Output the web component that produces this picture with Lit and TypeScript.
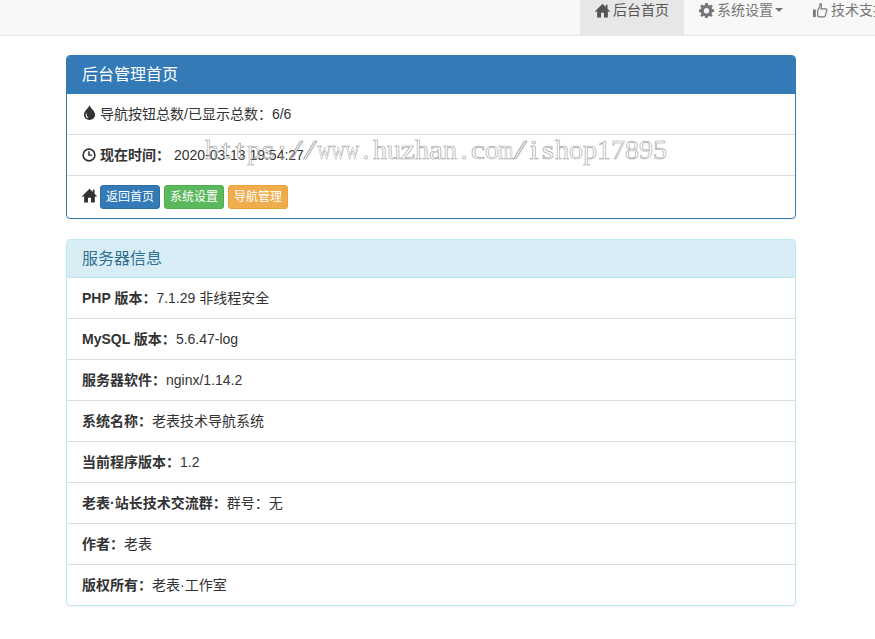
import { LitElement, html, css, svg } from "lit";
import { customElement } from "lit/decorators.js";

const home = svg`<path d="M7 .8 0 7.600l.9.9L2 7.500V13.500h3.600V9.200h2.800v4.300H12V7.500l1.100 1 .9-.9-2.300-2.200V1.600H10v2.200L7 .8z"/>`;
const tint = svg`<path fill-rule="evenodd" d="M7 0C6.300 3 1.800 5.400 1.800 9.200 1.800 11.900 4.100 14 7 14s5.200-2.100 5.200-4.800C12.200 5.400 7.700 3 7 0zM5.300 12.300C4.100 11.700 3.400 10.500 3.400 9.200c0-.8.300-1.500.7-2.200 0 1.900.4 3.800 1.900 5.000z"/>`;
const time = svg`<path fill-rule="evenodd" d="M7 .3a6.700 6.700 0 1 0 0 13.400A6.700 6.700 0 0 0 7 .3zM7 1.900a5.100 5.100 0 1 1 0 10.200A5.100 5.100 0 0 1 7 1.900zM6.200 3.300v4.500h4V6.400H7.700V3.300z"/>`;
const cog = svg`<path fill-rule="evenodd" d="M5.800 0h2.400l.3 1.900 1.200.5L11.300 1.300 12.900 3l-1.100 1.500.5 1.200 1.700.3v2.400l-1.800.3-.5 1.200 1.100 1.500-1.600 1.700-1.600-1.100-1.200.5-.3 1.900H5.800l-.3-1.900-1.200-.5-1.600 1.100L1.100 11.500l1.100-1.500-.5-1.200L0 8.400V6l1.700-.3.500-1.200L1.100 3l1.600-1.700 1.600 1.100 1.200-.5zM7 4.700a2.500 2.500 0 1 0 0 5 2.500 2.500 0 0 0 0-5z"/>`;
const thumb = svg`<path fill-rule="evenodd" d="M0 6h2.600v7H0zM6.700 0c1.300 0 2 1 1.800 2.300L8.100 5h3.700c1.300 0 2 1.100 1.600 2.300l-1.500 4.800c-.3.900-.9 1.400-1.900 1.400H6.500c-1 0-1.900-.4-2.700-1V6.200C5 5 6 3.500 6.100.6 6.100.2 6.300 0 6.700 0zm.4 1.300C7 3.700 6 5.500 4.900 6.700v5.200c.5.300 1 .5 1.600.5H10c.4 0 .7-.2.800-.6l1.500-4.800c.2-.6-.1-.9-.6-.9H6.800l.6-3.800c.1-.5 0-.8-.3-1z"/>`;

const ic = (p: unknown) =>
  html`<svg class="ic" viewBox="0 0 14 14" fill="currentColor" aria-hidden="true">${p}</svg>`;

const rows: [string, string][] = [
  ["PHP 版本：", "7.1.29 非线程安全"],
  ["MySQL 版本：", "5.6.47-log"],
  ["服务器软件：", "nginx/1.14.2"],
  ["系统名称：", "老表技术导航系统"],
  ["当前程序版本：", "1.2"],
  ["老表·站长技术交流群：", "群号：无"],
  ["作者：", "老表"],
  ["版权所有：", "老表·工作室"],
];

const mark = "https://www.huzhan.com/ishop17895";
const cellClass = (c: string) => {
  if (c === "w" || c === "m") return "cell narrow";
  if (c === "/") return "cell wide";
  if ("tsiaczl:".includes(c)) return "cell fuller";
  return "cell";
};

@customElement("app-root")
export class AppRoot extends LitElement {
  static styles = css`
    :host {
      display: block;
      position: relative;
      height: 639px;
      overflow: hidden;
      background: #fff;
      color: #333;
      font: 14px/20px "Liberation Sans", "Noto Sans CJK SC", sans-serif;
    }
    .ic { width: 14px; height: 14px; flex: none; }
    .nav {
      display: flex;
      height: 35px;
      padding-left: 580px;
      background: #f8f8f8;
      border-bottom: 1px solid #e7e7e7;
      white-space: nowrap;
      color: #777;
    }
    .nav a {
      display: flex;
      align-items: center;
      gap: 3px;
      flex: none;
      padding: 0 15px 15px;
      height: 20px;
    }
    .nav .ic { width: 15px; height: 15px; }
    .nav a.active { background: #e7e7e7; color: #555; }
    .caret {
      width: 0; height: 0;
      margin-left: -1px;
      border-top: 4px solid #777;
      border-left: 4px solid transparent;
      border-right: 4px solid transparent;
    }
    .page {
      display: flex;
      flex-direction: column;
      gap: 20px;
      width: 730px;
      margin: 19px 0 0 66px;
    }
    .panel {
      border: 1px solid #337ab7;
      border-radius: 4px;
      box-shadow: 0 1px 1px rgba(0, 0, 0, .05);
      overflow: hidden;
    }
    .panel.info { border-color: #bce8f1; }
    .head {
      padding: 10px 15px;
      font-size: 16px;
      line-height: 17px;
      background: #337ab7;
      color: #fff;
      border-bottom: 1px solid #337ab7;
    }
    .info .head { background: #d9edf7; color: #31708f; border-bottom-color: #bce8f1; }
    .row {
      display: flex;
      align-items: center;
      height: 40px;
      padding: 0 15px;
      border-top: 1px solid #ddd;
      white-space: pre;
    }
    .head + .row { border-top: 0; }
    .row .ic { margin-right: 4px; }
    .row.drop .ic { width: 15px; height: 15px; margin: -3px 3px 0 0; }
    .row b { font-weight: 700; }
    .btns { height: 42px; gap: 4px; }
    .btns .ic { width: 15px; height: 15px; margin: -4px -1px 0 0; }
    .btn {
      padding: 0 5px;
      height: 22px;
      display: flex;
      align-items: center;
      font-size: 12px;
      line-height: 18px;
      color: #fff;
      border-radius: 3px;
      border: 1px solid transparent;
    }
    .primary { background: #337ab7; border-color: #2e6da4; }
    .success { background: #5cb85c; border-color: #4cae4c; }
    .warning { background: #f0ad4e; border-color: #eea236; }
    .mark {
      position: absolute;
      left: 205px;
      top: 135px;
      display: flex;
      font: 28px/30px "Liberation Serif", serif;
      color: rgba(255, 255, 255, .2);
      -webkit-text-stroke: .6px #a0a0a0;
      white-space: nowrap;
      pointer-events: none;
    }
    .cell { width: 14px; display: inline-flex; justify-content: center; }
    .narrow { transform: scaleX(.68); }
    .wide { transform: scaleX(1.7); }
    .fuller { transform: scaleX(1.15); }
  `;

  render() {
    return html`
      <div class="nav">
        <a class="active">${ic(home)}后台首页</a>
        <a>${ic(cog)}系统设置<span class="caret"></span></a>
        <a>${ic(thumb)}技术支持</a>
      </div>
      <div class="page">
        <section class="panel">
          <div class="head">后台管理首页</div>
          <div class="row drop">${ic(tint)}导航按钮总数/已显示总数：6/6</div>
          <div class="row">${ic(time)}<b>现在时间：</b><span> 2020-03-13 19:54:27</span></div>
          <div class="row btns">
            ${ic(home)}
            <span class="btn primary">返回首页</span>
            <span class="btn success">系统设置</span>
            <span class="btn warning">导航管理</span>
          </div>
        </section>
        <section class="panel info">
          <div class="head">服务器信息</div>
          ${rows.map(([k, v]) => html`<div class="row"><b>${k}</b>${v}</div>`)}
        </section>
      </div>
      <div class="mark">${[...mark].map((c) => html`<span class=${cellClass(c)}>${c}</span>`)}</div>
    `;
  }
}
